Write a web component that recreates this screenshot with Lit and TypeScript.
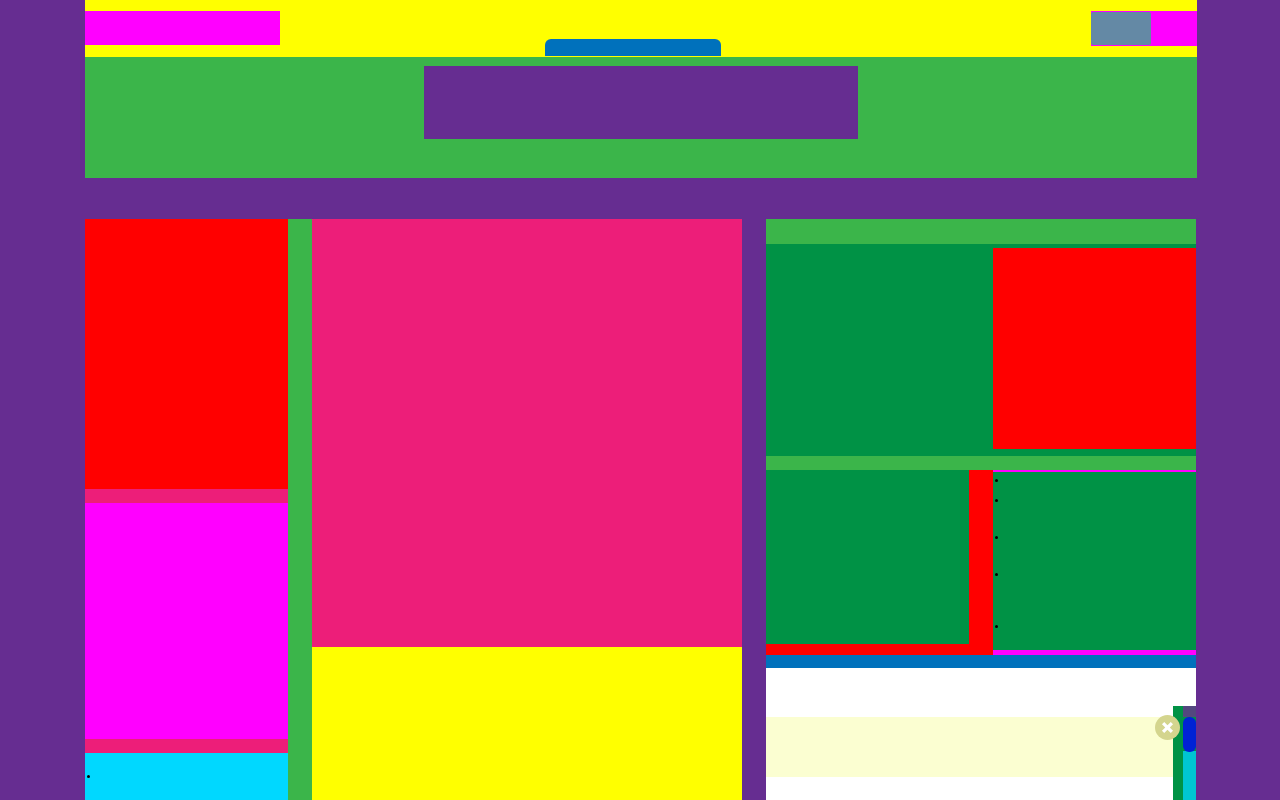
import { LitElement, html, css } from "lit";
import { customElement } from "lit/decorators.js";

@customElement("app-root")
export class AppRoot extends LitElement {
  static styles = css`
    :host {
      display: block;
      background: #662d91;
      font-family: "Liberation Sans", Arial, sans-serif;
    }
    * { box-sizing: border-box; }
    button {
      border: 0;
      padding: 0;
      cursor: pointer;
    }
    ul {
      list-style: none;
      margin: 0;
      padding: 0;
    }
    .page {
      display: flex;
      flex-direction: column;
      min-height: 100vh;
      padding: 0 83px 0 85px;
    }
    .topbar {
      display: grid;
      grid-template-columns: 460fr 176px 476fr;
      height: 57px;
      background: #ffff00;
    }
    .logo {
      display: block;
      width: 195px;
      height: 34px;
      margin-top: 11px;
      background: #ff00ff;
    }
    .tab {
      align-self: end;
      height: 17px;
      margin-bottom: 1px;
      border-radius: 6px 6px 0 0;
      background: #0071bc;
    }
    .account {
      justify-self: end;
      width: 106px;
      height: 35px;
      margin-top: 11px;
      padding: 1px 0;
      background: #ff00ff;
    }
    .login {
      display: block;
      width: 60px;
      height: 33px;
      border-radius: 2px;
      background: #6489a5;
    }
    .banner {
      height: 121px;
      padding-top: 9px;
      background: #3bb54a;
    }
    .ad {
      width: 434px;
      height: 73px;
      margin: 0 auto;
      background: #662d91;
    }
    .main {
      flex: 1;
      display: grid;
      grid-template-columns: 203fr 24px 430fr 24px 430fr;
      margin: 41px 1px 0 0;
    }
    .columns {
      grid-column: 1 / 4;
      display: grid;
      grid-template-columns: subgrid;
      background: #3bb54a;
    }
    .side {
      display: flex;
      flex-direction: column;
      gap: 14px;
      background: #ed1e79;
    }
    .promo {
      height: 270px;
      background: #ff0000;
    }
    .story {
      height: 236px;
      background: #ff00ff;
    }
    .links {
      flex: 1;
      padding-top: 15px;
      background: #00d8ff;
    }
    .center {
      grid-column: 3;
      display: flex;
      flex-direction: column;
    }
    .lead {
      height: 428px;
      background: #ed1e79;
    }
    .more {
      flex: 1;
      background: #ffff00;
    }
    .right {
      grid-column: 5;
      display: flex;
      flex-direction: column;
      position: relative;
      background: #ffffff;
    }
    .heading {
      height: 25px;
      background: #3bb54a;
    }
    .feature {
      display: flex;
      justify-content: flex-end;
      height: 212px;
      padding: 4px 0 7px;
      background: #009245;
    }
    .thumb {
      width: 203px;
      background: #ff0000;
    }
    .divider {
      height: 14px;
      background: #3bb54a;
    }
    .pair {
      display: grid;
      grid-template-columns: 1fr 203px;
      grid-template-rows: 100%;
      height: 185px;
      background: #ff0000;
    }
    .card {
      margin: 0 24px 11px 0;
      background: #009245;
    }
    .news {
      border: solid #ff00ff;
      border-width: 2px 0 5px;
      background: #009245;
    }
    .item {
      height: 37px;
      padding: 7px 0 0 2px;
    }
    .item::before {
      content: "";
      display: block;
      width: 3px;
      height: 3px;
      border-radius: 50%;
      background: #000000;
    }
    .item.short { height: 20px; }
    .item.tall { height: 52px; }
    .strip {
      height: 13px;
      margin-bottom: 49px;
      background: #0071bc;
    }
    .notice {
      height: 60px;
      background: #fbfed1;
    }
    .dock {
      position: absolute;
      top: 487px;
      right: 0;
      bottom: 0;
      width: 23px;
      padding-left: 10px;
      background: #009245;
    }
    .track {
      height: 100%;
      padding-top: 11px;
      background: linear-gradient(#53477f 11px, #009245 11px, #009245 45px, #00c6d2 45px);
    }
    .handle {
      display: block;
      width: 100%;
      height: 35px;
      border-radius: 6px;
      background: #0022d5;
    }
    .close {
      position: absolute;
      top: 9px;
      left: -18px;
      width: 25px;
      height: 25px;
      border-radius: 50%;
      background: #d4d58e;
    }
    .cross {
      display: block;
      width: 25px;
      height: 25px;
    }
  `;

  private items = ["short", "", "", "tall", "short"];

  render() {
    return html`
      <div class="page">
        <header class="topbar">
          <a class="logo" href="#" aria-label="Home"></a>
          <a class="tab" href="#" aria-label="Section"></a>
          <div class="account">
            <button class="login" aria-label="Account"></button>
          </div>
        </header>
        <section class="banner"><div class="ad"></div></section>
        <main class="main">
          <div class="columns">
            <aside class="side">
              <div class="promo"></div>
              <div class="story"></div>
              <ul class="links"><li class="item"></li></ul>
            </aside>
            <div class="center">
              <div class="lead"></div>
              <div class="more"></div>
            </div>
          </div>
          <div class="right">
            <div class="heading"></div>
            <div class="feature"><div class="thumb"></div></div>
            <div class="divider"></div>
            <div class="pair">
              <div class="card"></div>
              <ul class="news">
                ${this.items.map((size) => html`<li class="item ${size}"></li>`)}
              </ul>
            </div>
            <div class="strip"></div>
            <div class="notice"></div>
            <div class="dock">
              <div class="track">
                <button class="handle" aria-label="Scroll"></button>
              </div>
              <button class="close" aria-label="Close">
                <svg class="cross" viewBox="0 0 25 25" aria-hidden="true">
                  <path d="M8.1 8.1 L16.9 16.9 M16.9 8.1 L8.1 16.9" stroke="#ffffff" stroke-width="3.2" fill="none" />
                </svg>
              </button>
            </div>
          </div>
        </main>
      </div>
    `;
  }
}
